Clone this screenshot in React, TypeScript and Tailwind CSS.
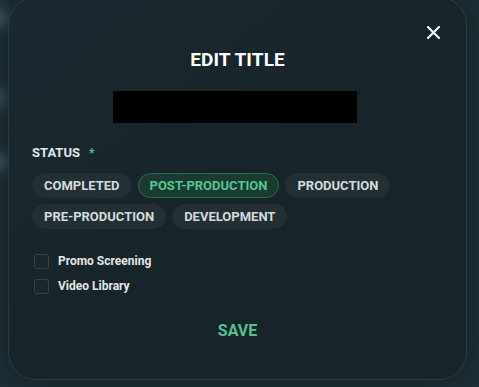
import { useState } from 'react';

const statuses = ['COMPLETED', 'POST-PRODUCTION', 'PRODUCTION', 'PRE-PRODUCTION', 'DEVELOPMENT'];

export default function App() {
    const [status, setStatus] = useState('POST-PRODUCTION');
    const [flags, setFlags] = useState({ promo: false, library: false });

    return (
        <div
            className="relative w-[479px] h-[387px] overflow-hidden bg-[#1d3036]"
            style={{ fontFamily: 'Roboto, "Liberation Sans", sans-serif' }}
        >
            {/* blurred backdrop highlights */}
            <div className="absolute -left-3 top-2 w-5 h-5 rounded-full bg-[#5b7378] blur-[6px] opacity-60" />
            <div className="absolute -left-3 top-[88px] w-5 h-5 rounded-full bg-[#5b7378] blur-[6px] opacity-50" />
            <div className="absolute -left-3 top-[152px] w-5 h-5 rounded-full bg-[#5b7378] blur-[6px] opacity-60" />

            {/* Modal */}
            <div className="absolute left-[8px] top-[-3px] w-[459px] h-[383px] rounded-[28px] border border-[#2a3b41] bg-gradient-to-br from-[#1a292f] via-[#17252a] to-[#17252a] shadow-[0_0_30px_rgba(0,0,0,0.35)] px-[23px] flex flex-col">
                <button className="absolute right-[26px] top-[28px] text-white" aria-label="Close">
                    <svg width="13" height="13" viewBox="0 0 13 13" fill="none">
                        <path d="M1 1L12 12M12 1L1 12" stroke="#f1f3f3" strokeWidth="2.2" strokeLinecap="square" />
                    </svg>
                </button>

                <h2 className="mt-[49px] text-center text-[19px] leading-[26px] font-bold text-white tracking-[0.1px]">EDIT TITLE</h2>

                <div className="mt-[18px] ml-[81px] w-[244px] h-[32px] bg-black" />

                <div className="mt-[21px] flex items-center gap-[9px] text-[13px] leading-[18px] font-bold text-[#e4e8e9]">
                    STATUS <span className="text-[#4cc28e] text-[12px]">*</span>
                </div>

                <div className="mt-[11px] flex flex-wrap gap-[6px] w-[380px]">
                    {statuses.map((s) => {
                        const active = s === status;
                        return (
                            <button
                                key={s}
                                onClick={() => setStatus(s)}
                                className={`h-[25px] px-[11px] rounded-full text-[13px] leading-[17px] font-bold border ${
                                    active
                                        ? 'bg-[#1b3a31] border-[#2e6a50] text-[#55c792]'
                                        : 'bg-[#223035] border-[#223035] text-[#d5dbdc]'
                                }`}
                            >
                                {s}
                            </button>
                        );
                    })}
                </div>

                <div className="mt-[25px] flex flex-col gap-[10px] pl-[2px]">
                    <label className="flex items-center gap-[9px] text-[12px] leading-[15px] font-bold text-[#e3e6e7]">
                        <input
                            type="checkbox"
                            checked={flags.promo}
                            onChange={() => setFlags({ ...flags, promo: !flags.promo })}
                            className="appearance-none w-[15px] h-[15px] rounded-[3px] border border-[#34454a] bg-[#1a282d]"
                        />
                        Promo Screening
                    </label>
                    <label className="flex items-center gap-[9px] text-[12px] leading-[15px] font-bold text-[#e3e6e7]">
                        <input
                            type="checkbox"
                            checked={flags.library}
                            onChange={() => setFlags({ ...flags, library: !flags.library })}
                            className="appearance-none w-[15px] h-[15px] rounded-[3px] border border-[#34454a] bg-[#1a282d]"
                        />
                        Video Library
                    </label>
                </div>

                <button className="mt-[26px] self-center text-[16px] leading-[22px] font-bold text-[#52c390]">SAVE</button>
            </div>
        </div>
    );
}
